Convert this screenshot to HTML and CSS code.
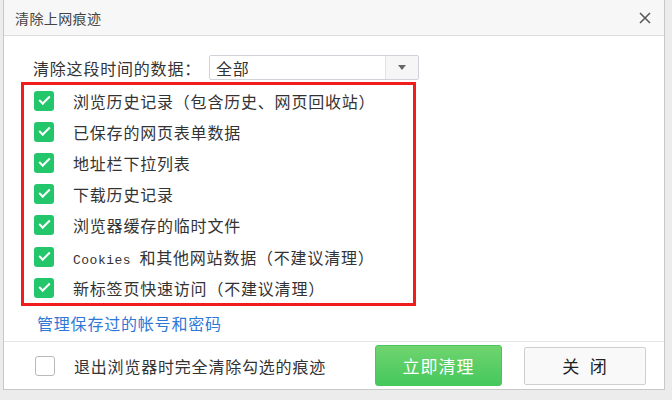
FILE: index.html
```html
<!DOCTYPE html>
<html lang="zh-CN">
<head>
  <meta charset="UTF-8">
  <title>清除上网痕迹</title>
  <link rel="stylesheet" href="styles.css">
</head>
<body>
  <div class="dialog">
    <div class="titlebar">
      <span class="title">清除上网痕迹</span>
      <svg class="close-x" width="12" height="12" viewBox="0 0 12 12">
        <path d="M1 1 L11 11 M11 1 L1 11" stroke="#555" stroke-width="1.5" fill="none"/>
      </svg>
    </div>

    <div class="content">
      <div class="range">
        <span class="range-label">清除这段时间的数据：</span>
        <div class="select">
          <span class="select-value">全部</span>
          <span class="select-arrow"></span>
        </div>
      </div>

      <div class="options">
        <div class="option"><span class="check on"></span><span>浏览历史记录（包含历史、网页回收站）</span></div>
        <div class="option"><span class="check on"></span><span>已保存的网页表单数据</span></div>
        <div class="option"><span class="check on"></span><span>地址栏下拉列表</span></div>
        <div class="option"><span class="check on"></span><span>下载历史记录</span></div>
        <div class="option"><span class="check on"></span><span>浏览器缓存的临时文件</span></div>
        <div class="option"><span class="check on"></span><span><span class="mono">Cookies </span>和其他网站数据（不建议清理）</span></div>
        <div class="option"><span class="check on"></span><span>新标签页快速访问（不建议清理）</span></div>
      </div>

      <a class="manage" href="#">管理保存过的帐号和密码</a>
    </div>

    <div class="footer">
      <div class="exit-opt"><span class="check"></span><span>退出浏览器时完全清除勾选的痕迹</span></div>
      <div class="buttons">
        <button class="btn-clear">立即清理</button>
        <button class="btn-close">关&nbsp;&nbsp;闭</button>
      </div>
    </div>
  </div>
</body>
</html>
```

FILE: styles.css
```css
body {
  margin: 0;
  background-color: #ececec;
  font-family: "Noto Sans CJK SC", "Noto Sans", sans-serif;
  color: #333;
}
.dialog {
  width: 662px;
  height: 390px;
  margin-left: 3px;
  background-color: #fff;
  border-left: 1px solid #c8c8c8;
  border-right: 1px solid #c8c8c8;
  border-bottom: 1px solid #c8c8c8;
  display: flex;
  flex-direction: column;
  box-sizing: border-box;
}
.titlebar {
  height: 36px;
  box-sizing: border-box;
  background-color: #f7f7f7;
  border-bottom: 1px solid #dcdcdc;
  padding: 0 13px 0 11px;
  display: flex;
  justify-content: space-between;
  align-items: center;
}
.title {
  font-size: 14px;
  letter-spacing: 0.4px;
  color: #444;
}
.content {
  padding: 19px 0 0 17px;
  font-size: 16px;
  letter-spacing: 0.8px;
}
.range {
  display: flex;
  align-items: center;
  padding-left: 12px;
}
.range-label {
  width: 176px;
}
.select {
  width: 210px;
  height: 25px;
  box-sizing: border-box;
  border: 1px solid #cfd3d8;
  border-radius: 2px;
  display: flex;
  align-items: center;
}
.select-value {
  flex: 1;
  padding-left: 6px;
}
.select-arrow {
  width: 32px;
  height: 100%;
  border-left: 1px solid #e2e2e2;
  background-color: #f6f6f6;
  display: flex;
  align-items: center;
  justify-content: center;
}
.select-arrow::after {
  content: "";
  border-left: 4px solid transparent;
  border-right: 4px solid transparent;
  border-top: 5px solid #666;
}
.options {
  width: 395px;
  margin-top: 2px;
  box-sizing: border-box;
  border: 3px solid #f11d1d;
  padding: 0 0 0 10px;
}
.option {
  height: 31.2px;
  display: flex;
  align-items: center;
}
.check {
  width: 20px;
  height: 20px;
  box-sizing: border-box;
  border: 1px solid #b9b9b9;
  border-radius: 3px;
  background-color: #fff;
  margin-right: 19px;
  flex-shrink: 0;
  position: relative;
}
.check.on {
  border: none;
  background-color: #23c66a;
}
.check.on::after {
  content: "";
  position: absolute;
  left: 5px;
  top: 5px;
  width: 9px;
  height: 4px;
  border-left: 2px solid #fff;
  border-bottom: 2px solid #fff;
  transform: rotate(-45deg);
}
.mono {
  font-family: "Liberation Mono", monospace;
  font-size: 13px;
  letter-spacing: 0.5px;
  white-space: pre;
}
.manage {
  display: block;
  margin: 5px 0 0 16px;
  color: #2f78d6;
  text-decoration: none;
  line-height: 24px;
}
.footer {
  flex: 1;
  margin-top: 6px;
  border-top: 1px solid #e6e6e6;
  display: flex;
  align-items: center;
  justify-content: space-between;
  padding: 0 18px 0 31px;
  font-size: 16px;
  letter-spacing: 0.8px;
}
.exit-opt {
  display: flex;
  align-items: center;
}
.buttons {
  display: flex;
  align-items: center;
  gap: 22px;
}
.btn-clear {
  width: 127px;
  height: 41px;
  border: 1px solid #49c65c;
  border-radius: 3px;
  background: linear-gradient(#70d46f, #45c85c);
  color: #fff;
  font-family: inherit;
  font-size: 17px;
  letter-spacing: 1px;
}
.btn-close {
  width: 122px;
  height: 38px;
  border: 1px solid #cfcfcf;
  border-radius: 2px;
  background-color: #f9f9f9;
  color: #222;
  font-family: inherit;
  font-size: 17px;
  letter-spacing: 1px;
}
```
